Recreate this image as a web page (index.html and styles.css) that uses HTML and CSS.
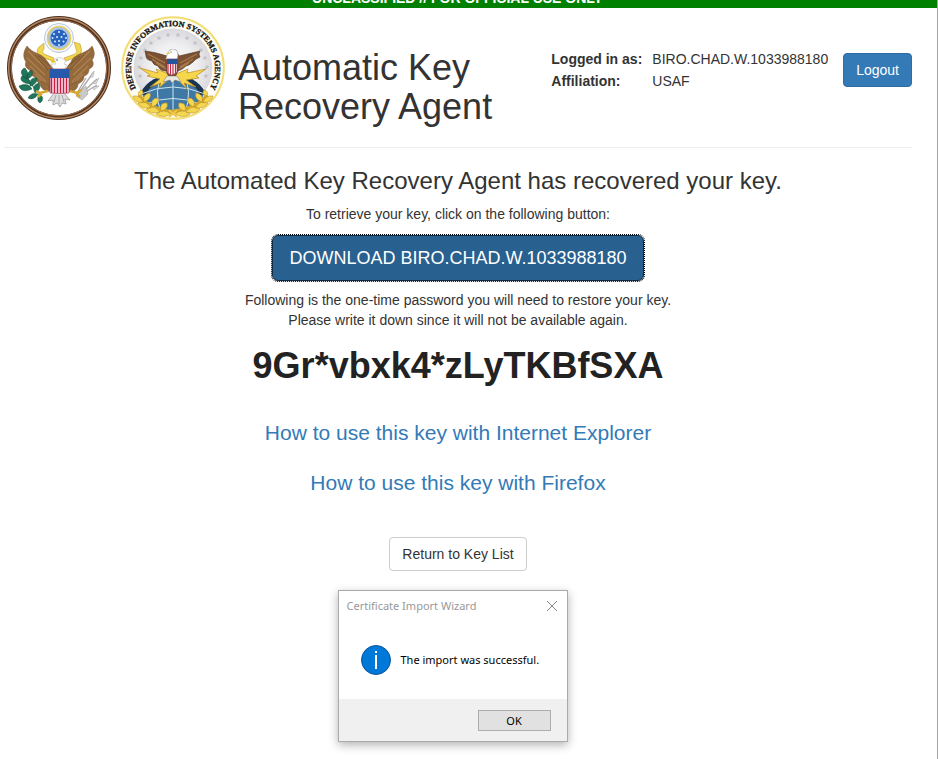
FILE: index.html
```html
<!DOCTYPE html>
<html lang="en">
<head>
<meta charset="utf-8">
<title>Automatic Key Recovery Agent</title>
<link rel="stylesheet" href="styles.css">
</head>
<body>
<div class="banner"><span>UNCLASSIFIED // FOR OFFICIAL USE ONLY</span></div>
<div class="page">
  <header class="header">
    <svg class="seal" viewBox="0 0 104 104" role="img" aria-label="Great Seal of the United States">
      <circle cx="52" cy="52" r="49.5" fill="#fff" stroke="#4a3122" stroke-width="5"/>
      <circle cx="52" cy="52" r="50.3" fill="none" stroke="#b98660" stroke-width="1.4"/>
      <circle cx="52" cy="52" r="47.8" fill="none" stroke="#a3714e" stroke-width="1"/>
      <path d="M31 40Q29 34 32 31L37 27V33Q34 36 37 38L47 42L46 45ZM73 40Q76 34 73 28L67 26L69 33Q71 36 68 38L57 42L59 45Z" fill="#f1d64e" stroke="#ad8b23" stroke-width=".5"/>
      <circle cx="52" cy="22" r="14.5" fill="#f4f7fd" stroke="#b8c6df" stroke-width="1"/>
      <circle cx="52" cy="22" r="11.5" fill="#a9c4ea" stroke="#e6cd5a" stroke-width="1.5"/>
      <circle cx="52" cy="22" r="8.5" fill="#2863bd"/>
      <g fill="#dcecff"><circle cx="47" cy="18" r="1"/><circle cx="52" cy="16" r="1"/><circle cx="57" cy="18" r="1"/><circle cx="45.500" cy="22" r="1"/><circle cx="50" cy="21" r="1"/><circle cx="54.500" cy="21" r="1"/><circle cx="59" cy="22" r="1"/><circle cx="48" cy="25.500" r="1"/><circle cx="52" cy="25" r="1"/><circle cx="56.500" cy="25.500" r="1"/><circle cx="52" cy="29" r="1"/></g>
      <path d="M20 30C14 39 18 44 19 46C17 50 20 53 23 54C22 58 25 60 28 61C28 65 31 66 33 68C34 74 40 76 44 75L61 75C66 77 71 73 71 68C75 66 77 64 77 60C81 59 82 56 82 53C87 51 87 47 85 44C89 39 87 34 85 30C80 38 67 37 64 46L58 54H47L40 45C36 37 25 38 20 30Z" fill="#946a3d" stroke="#7b532d" stroke-width=".5"/>
      <path d="M21 35L38 52M20 42L38 59M23 50L39 66M28 58L41 71M83 35L66 52M84 42L66 59M81 50L65 66M76 58L63 71" stroke="#ad8151" stroke-width="1.3"/>
      <path d="M28 39L41 54M32 40L43 50M77 39L63 54M73 40L61 50M34 65L42 71M70 65L62 71" stroke="#704b27" stroke-width=".8"/>
      <path d="M47 54L44 48L49 48L47 44Q50 40 55 42L59 45L57 48L60 49L57 54Z" fill="#fff" stroke="#b9b9b9" stroke-width=".6"/>
      <path d="M47 44L43 44L45 47L49 46Z" fill="#e8c62b"/><circle cx="50" cy="44" r=".7" fill="#333"/>
      <path d="M47 77L41 85L46 84L46 89L50 87L53 91L55 87L59 88L58 83L63 84L57 77Z" fill="#dedede" stroke="#8c8c8c" stroke-width=".7"/>
      <path d="M49 79L47 86M52 79V88M55 79L57 86" stroke="#999" stroke-width=".8"/>
      <path d="M34 80C28 73 21 66 17 53" fill="none" stroke="#176046" stroke-width="1"/>
      <path d="M19 63C12 58 14 53 18 52Q23 58 19 63ZM23 68C13 67 13 62 15 60Q24 62 23 68ZM25 73C16 77 13 73 12 70Q21 66 25 73ZM20 63Q19 56 25 54Q27 61 20 63ZM23 70Q22 61 30 62Q30 68 24 70ZM28 77Q24 69 32 67Q35 73 28 77ZM31 78Q24 76 21 82Q27 85 31 78ZM32 78Q29 85 33 87Q39 82 32 78Z" fill="#20765a" stroke="#0e4c39" stroke-width=".5"/>
      <path d="M71 78L86 57M73 79L90 63M72 80L90 69M70 77L79 62" stroke="#aaa" stroke-width="1.3"/>
      <path d="M69 80L79 70L81 78L75 84Z" fill="#c9c9c9" stroke="#999" stroke-width=".5"/>
      <path d="M83 61L87 55L86 61ZM86 67L92 62L89 68ZM86 71L92 70L87 74Z" fill="#ddd" stroke="#999" stroke-width=".5"/>
      <path d="M41 75L33 77L29 75M35 77L31 81M63 75L70 77L74 74M69 77L73 81" fill="none" stroke="#d6a72c" stroke-width="2.5"/>
      <path d="M43 53H62V77Q52 78 43 77Z" fill="#f8edf3" stroke="#9b1e3d" stroke-width=".6"/>
      <path d="M44.500 61V77M47.500 61V77M50.500 61V77M53.500 61V77M56.500 61V77M59.500 61V77" stroke="#c81e43" stroke-width="1.5"/>
      <path d="M43 53H62V62H43Z" fill="#2459ac"/>
    </svg>
    <svg class="seal" viewBox="0 0 104 104" role="img" aria-label="Defense Information Systems Agency seal">
      <defs>
        <path id="ring" d="M14.500 71.100A42 42 0 1 1 89.500 71.100"/>
        <radialGradient id="sky"><stop offset="0" stop-color="#fff"/><stop offset=".6" stop-color="#efeff1"/><stop offset="1" stop-color="#d9d9dd"/></radialGradient>
        <clipPath id="globe"><path d="M20 76Q30 59 52 59Q74 59 84 76Q76 96 52 96Q28 96 20 76Z"/></clipPath>
        <path id="star" d="M0-2.500L.7-.8 2.500-.8 1.100.4 1.600 2.200 0 1.100-1.600 2.200-1.100.4-2.500-.8-.7-.8Z"/>
      </defs>
      <circle cx="52" cy="52" r="50.800" fill="#fffdf4" stroke="#f3dc71" stroke-width="2"/>
      <circle cx="52" cy="52" r="39.500" fill="url(#sky)"/>
      <text class="ring-text"><textPath href="#ring" startOffset="50%" text-anchor="middle">DEFENSE INFORMATION SYSTEMS AGENCY</textPath></text>
      <g fill="#bfbfc4"><use href="#star" x="19" y="60"/><use href="#star" x="18" y="51"/><use href="#star" x="20" y="42"/><use href="#star" x="24" y="34"/><use href="#star" x="30" y="27"/><use href="#star" x="38" y="22"/><use href="#star" x="47" y="19"/><use href="#star" x="57" y="19"/><use href="#star" x="66" y="22"/><use href="#star" x="74" y="27"/><use href="#star" x="80" y="34"/><use href="#star" x="84" y="42"/><use href="#star" x="86" y="51"/><use href="#star" x="85" y="60"/></g>
      <g clip-path="url(#globe)">
        <rect x="18" y="57" width="68" height="42" fill="#3f78a5"/>
        <path d="M18 76L32 57H42L34 69L28 73L25 80ZM86 76L72 57H62L70 69L76 73L79 80Z" fill="#1b3450"/>
        <path d="M42 57Q32 74 40 97M62 57Q72 74 64 97M52 57V97M20 78Q52 64 84 78M25 88Q52 77 79 88" fill="none" stroke="#cde5ef" stroke-width="1"/>
      </g>
      <path d="M48 58L35 53L37 57L19 52L29 59L26 60L39 63L29 71L40 67L38 72L50 61ZM55 58L67 53L66 57L85 53L75 60L78 62L65 64L75 71L63 67L66 73L54 61Z" fill="#f6d64a" stroke="#b98921" stroke-width=".7"/>
      <path d="M24 35Q34 36 46 40L49 34H55L58 40L79 35Q77 38 79 41Q74 43 72 46Q69 49 65 50Q61 54 57 55L54 61H48L45 55Q39 55 37 50Q32 49 31 45Q25 44 25 40Z" fill="#7a5133" stroke="#4c321d" stroke-width=".6"/>
      <path d="M27 38L44 47M31 43L44 51M35 47L45 53M76 38L59 47M72 43L59 51M68 47L58 53" stroke="#a87a4c" stroke-width="1.3"/>
      <path d="M45 43L47 36Q50 32 55 34Q58 37 56 43Z" fill="#fff" stroke="#bbb" stroke-width=".5"/>
      <path d="M48 36L45 38L49 38Z" fill="#edbe35"/><circle cx="50" cy="36" r=".6" fill="#222"/>
      <path d="M46 60L42 66L49 64L51 67L54 64L60 66L56 60Z" fill="#e9e7df" stroke="#777" stroke-width=".5"/>
      <path d="M46 43H56V56Q54 58 51 59Q47 58 46 56Z" fill="#fff" stroke="#8a1c31" stroke-width=".5"/>
      <path d="M47 47V57M49.500 47V58M52 47V59M54.500 47V57" stroke="#c42745" stroke-width="1.2"/>
      <path d="M46 43H56V48H46Z" fill="#25549b"/>
      <path d="M18 79Q25 92 50 96Q79 92 86 79" fill="none" stroke="#d2a72b" stroke-width="4"/>
      <g fill="#f5d74f" stroke="#bd942a" stroke-width=".6"><path id="leaves" d="M18 80Q16 75 21 74Q24 78 18 80ZM22 87Q13 86 12 80Q20 79 22 87ZM23 86Q21 78 29 77Q31 83 23 86ZM30 92Q20 93 17 87Q26 84 30 92ZM31 91Q29 82 37 82Q39 88 31 91ZM39 96Q29 99 25 93Q34 88 39 96ZM40 95Q38 86 46 87Q48 93 40 95ZM50 98Q42 103 35 98Q43 92 50 98Z"/><use href="#leaves" transform="matrix(-1 0 0 1 104 0)"/></g>
      <path d="M48 94L56 101M56 94L48 101" stroke="#ecc844" stroke-width="2"/>
    </svg>
    <h1>Automatic Key Recovery Agent</h1>
    <div class="account">
      <dl>
        <dt>Logged in as:</dt><dd>BIRO.CHAD.W.1033988180</dd>
        <dt>Affiliation:</dt><dd>USAF</dd>
      </dl>
      <button class="btn primary" type="button">Logout</button>
    </div>
  </header>
  <main>
    <h2>The Automated Key Recovery Agent has recovered your key.</h2>
    <p>To retrieve your key, click on the following button:</p>
    <button class="btn download" type="button">DOWNLOAD BIRO.CHAD.W.1033988180</button>
    <p>Following is the one-time password you will need to restore your key.<br>Please write it down since it will not be available again.</p>
    <strong class="password">9Gr*vbxk4*zLyTKBfSXA</strong>
    <nav class="help">
      <a href="#ie">How to use this key with Internet Explorer</a>
      <a href="#firefox">How to use this key with Firefox</a>
    </nav>
    <button class="btn" type="button">Return to Key List</button>
  </main>
</div>
<section class="dialog" role="dialog" aria-labelledby="dialog-title">
  <div class="dialog-title">
    <span id="dialog-title">Certificate Import Wizard</span>
    <button class="close" type="button" aria-label="Close"><svg viewBox="0 0 12 12"><path d="M1 1L11 11M11 1L1 11" fill="none" stroke="#888" stroke-width="1"/></svg></button>
  </div>
  <div class="dialog-body">
    <svg class="info" viewBox="0 0 30 30" aria-hidden="true"><circle cx="15" cy="15" r="14.500" fill="#0078d7" stroke="#0b569b"/><path d="M14 10H16V24H14ZM14 6H16V8H14Z" fill="#fff"/></svg>
    <span>The import was successful.</span>
  </div>
  <div class="dialog-actions"><button class="ok" type="button">OK</button></div>
</section>
</body>
</html>
```
FILE: styles.css
```css
* { box-sizing: border-box; }

body {
  position: relative;
  min-height: 100vh;
  margin: 0;
  border-right: 1px solid #a5a5a5;
  background: #fff;
  color: #333;
  font: 14px/20px "Liberation Sans", Arial, sans-serif;
}

.banner {
  display: flex;
  justify-content: center;
  align-items: flex-end;
  height: 8px;
  padding-right: 22px;
  overflow: hidden;
  background: #008000;
  color: #fff;
  font-weight: bold;
}

.page { margin: 0 25px 0 4px; }

.header {
  display: flex;
  align-items: flex-start;
  gap: 10px;
  padding: 8px 0 21px 3px;
  border-bottom: 1px solid #eee;
}

.seal { flex: none; width: 104px; height: 104px; }
.ring-text { font: bold 8px "Liberation Serif", serif; fill: #111; stroke: #111; stroke-width: .3px; }

h1 {
  flex: 1;
  margin: 32px 0 0 3px;
  font-size: 36px;
  font-weight: normal;
  line-height: 39px;
}

.account { display: flex; align-items: flex-start; gap: 15px; margin-top: 32px; }

dl {
  display: grid;
  grid-template-columns: auto auto;
  column-gap: 10px;
  margin: 0;
  line-height: 22px;
}

dt { font-weight: bold; }
dd { margin: 0; }

.btn {
  padding: 6px 12px;
  border: 1px solid #ccc;
  border-radius: 4px;
  background: #fff;
  color: #333;
  font: inherit;
}

.primary { margin-top: 5px; border-color: #2e6da4; background: #337ab7; color: #fff; }

.download {
  padding: 10px 16px;
  margin: 11px 0 9px;
  border-color: #122b40;
  border-radius: 6px;
  outline: 1px dotted #000;
  background: #286090;
  color: #fff;
  font-size: 18px;
  line-height: 24px;
}

main {
  display: flex;
  flex-direction: column;
  align-items: center;
  padding-top: 20px;
  text-align: center;
}

h2 { margin: 0 0 10px; font-size: 24px; font-weight: normal; line-height: 26px; }
p { margin: 0; }

.password { margin-top: 16px; color: #222; font-size: 36px; line-height: 40px; }

.help {
  display: flex;
  flex-direction: column;
  gap: 26px;
  margin: 35px 0 42px;
  font-size: 21px;
  line-height: 24px;
}

.help a { color: #337ab7; text-decoration: none; }

.dialog {
  position: absolute;
  top: 590px;
  left: calc(50% - 131px);
  width: 230px;
  border: 1px solid #aaa;
  background: #fff;
  box-shadow: 0 3px 9px rgba(0, 0, 0, .3);
  color: #000;
  font: 11px/16px "Noto Sans", sans-serif;
}

.dialog-title {
  display: flex;
  justify-content: space-between;
  align-items: center;
  height: 30px;
  padding: 0 9px 0 8px;
  color: #999;
}

.close { display: flex; padding: 0; border: 0; background: none; }
.close svg { width: 12px; height: 12px; }
.dialog-body { display: flex; align-items: center; gap: 10px; height: 78px; padding-left: 22px; }
.info { width: 30px; height: 30px; }

.dialog-actions {
  display: flex;
  justify-content: flex-end;
  padding: 11px 16px 10px;
  background: #f0f0f0;
}

.ok {
  width: 73px;
  height: 21px;
  padding: 0;
  border: 1px solid #adadad;
  background: #e1e1e1;
  color: #000;
  font: inherit;
}
```
